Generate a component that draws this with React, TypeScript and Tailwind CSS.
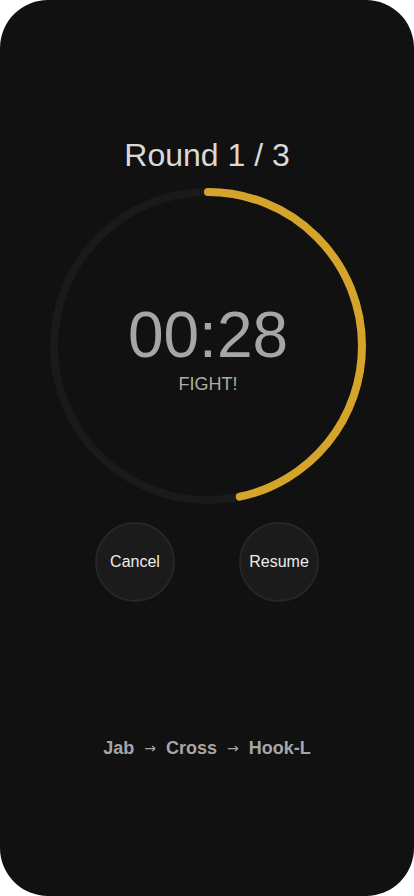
import { useState } from "react";

const RADIUS = 154;
const CIRCUMFERENCE = 2 * Math.PI * RADIUS;

export default function App() {
  const [secondsLeft] = useState(28);
  const total = 60;
  const progress = secondsLeft / total;

  const combo = ["Jab", "Cross", "Hook-L"];

  return (
    <div className="w-[414px] h-[896px] bg-white" style={{ fontFamily: "'Liberation Sans', Arial, sans-serif" }}>
      <div className="w-full h-full rounded-[48px] bg-[#111111] flex flex-col items-center pt-[136px]">
        {/* Round label */}
        <h1 className="text-[32px] leading-[38px] text-[#d9d9d9] font-normal">Round 1 / 3</h1>

        {/* Timer ring */}
        <div className="relative mt-[14px] ml-[2px] w-[316px] h-[316px]">
          <svg width="316" height="316" viewBox="0 0 316 316" className="-rotate-90">
            <circle cx="158" cy="158" r={RADIUS} fill="none" stroke="#1a1a1a" strokeWidth="8" />
            <circle
              cx="158"
              cy="158"
              r={RADIUS}
              fill="none"
              stroke="#d4a52a"
              strokeWidth="8"
              strokeLinecap="round"
              strokeDasharray={`${CIRCUMFERENCE * progress} ${CIRCUMFERENCE}`}
            />
          </svg>
          <div className="absolute inset-0 flex flex-col items-center justify-center pt-[6px]">
            <div className="text-[64px] leading-[64px] text-[#a6a6a6]">00:{secondsLeft}</div>
            <div className="mt-[6px] text-[18px] leading-[22px] text-[#ababab]">FIGHT!</div>
          </div>
        </div>

        {/* Controls */}
        <div className="mt-[18px] flex gap-[64px]">
          <button className="w-[80px] h-[80px] rounded-full bg-[#1b1b1b] border-2 border-[#262626] text-[16px] text-[#ececec]">
            Cancel
          </button>
          <button className="w-[80px] h-[80px] rounded-full bg-[#1b1b1b] border-2 border-[#262626] text-[16px] text-[#ececec]">
            Resume
          </button>
        </div>

        {/* Combo */}
        <div className="mt-[134px] flex items-center gap-[10px] text-[18px] leading-[24px] font-bold text-[#a6a6a6]">
          {combo.map((move, i) => (
            <span key={move} className="flex items-center gap-[10px]">
              {i > 0 && <span className="text-[14px] font-normal" style={{ fontFamily: "'DejaVu Sans', sans-serif" }}>→</span>}
              {move}
            </span>
          ))}
        </div>
      </div>
    </div>
  );
}
